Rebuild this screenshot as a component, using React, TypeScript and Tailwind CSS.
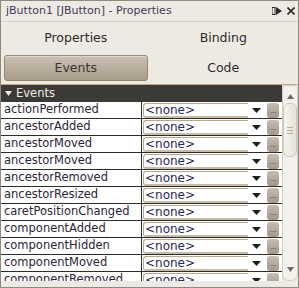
const events = [
  "actionPerformed",
  "ancestorAdded",
  "ancestorMoved",
  "ancestorMoved",
  "ancestorRemoved",
  "ancestorResized",
  "caretPositionChanged",
  "componentAdded",
  "componentHidden",
  "componentMoved",
  "componentRemoved",
];

function EventRow({ name }: { name: string }) {
  return (
    <div className="flex h-[17px] border-b border-[#2e2c2a] bg-white">
      <div className="flex w-[141px] items-center border-r border-[#2e2c2a] pl-[3px] text-[11.5px] leading-none text-[#2c2438]">
        {name}
      </div>
      <div className="flex flex-1 items-center pl-[1px]">
        <div className="flex h-[15px] w-[105px] items-center rounded-l-[3px] border-t border-l border-b-2 border-[#b8a88c] border-b-[#c9bca6] bg-white pl-[1px] text-[12px] leading-none text-[#28285a]">
          &lt;none&gt;
        </div>
        <div className="flex w-[16px] justify-center">
          <svg width="9" height="5" viewBox="0 0 9 5">
            <path d="M0 0 H9 L4.5 5 Z" fill="#1e1e1e" />
          </svg>
        </div>
        <div className="ml-[3px] flex h-[15px] w-[12px] items-end justify-center rounded-[3px] bg-gradient-to-b from-[#c6bdb0] to-[#a3978a] pb-[3px] text-[7px] leading-none text-[#3a342c]">
          ...
        </div>
      </div>
    </div>
  );
}

export default function App() {
  return (
    <div
      className="flex h-[288px] w-[299px] flex-col border border-[#8e8a82] bg-[#edeae3] text-[#2e2c2a]"
      style={{ fontFamily: '"DejaVu Sans", sans-serif' }}
    >
      <div className="flex h-[21px] items-center justify-between border-b border-[#d5cfc4] pl-[5px] pr-[3px]">
        <span className="text-[11px] text-[#45385a]">jButton1 [JButton] - Properties</span>
        <div className="flex items-center gap-[5px]">
          <svg width="10" height="8" viewBox="0 0 10 8">
            <rect x="0" y="0.5" width="3" height="7" fill="none" stroke="#2a2a2a" strokeWidth="1" />
            <path d="M4 0 L10 4 L4 8 Z" fill="#2a2a2a" />
          </svg>
          <svg width="8" height="8" viewBox="0 0 8 8">
            <path d="M0.5 0.5 L7.5 7.5 M7.5 0.5 L0.5 7.5" stroke="#2a2a2a" strokeWidth="1.6" />
          </svg>
        </div>
      </div>

      <div className="grid grid-cols-2 gap-x-[4px] gap-y-[4px] px-[3px] pt-[3px] text-[12.5px]">
        <div className="flex h-[26px] items-center justify-center">Properties</div>
        <div className="flex h-[26px] items-center justify-center">Binding</div>
        <div className="flex h-[26px] items-center justify-center rounded-[3px] border border-[#948873] bg-gradient-to-b from-[#cac1b4] to-[#a89b89] text-[#3a352f] shadow-[inset_0_1px_0_#ddd5ca]">
          Events
        </div>
        <div className="flex h-[26px] items-center justify-center">Code</div>
      </div>

      <div className="mt-[3px] h-[1px] bg-[#c2a983]" />

      <div className="flex h-[196px]">
        <div className="flex-1 overflow-hidden">
          <div className="flex h-[17px] items-center gap-[4px] bg-[#3c3a36] pl-[4px] text-[11.5px] leading-none text-[#f0ece4]">
            <svg width="7" height="5" viewBox="0 0 7 5">
              <path d="M0 0 H7 L3.5 5 Z" fill="#f0ece4" />
            </svg>
            Events
          </div>
          {events.map((e, i) => (
            <EventRow key={i} name={e} />
          ))}
        </div>
        <div className="flex w-[16px] flex-col items-center rounded-b-[7px] rounded-t-[4px] border border-[#d3cbbd] bg-[#f3f1ed] pt-[8px] pb-[8px]">
          <svg width="7" height="5" viewBox="0 0 7 5">
            <path d="M3.5 0 L7 5 H0 Z" fill="#6c6a66" />
          </svg>
          <div className="mt-[4px] flex h-[54px] w-[14px] flex-col items-center justify-center gap-[2px] rounded-[6px] border border-[#cfc6b6] bg-gradient-to-r from-[#f6f4f0] to-[#e6e1d8]">
            <div className="h-[1px] w-[6px] bg-[#b8b0a2]" />
            <div className="h-[1px] w-[6px] bg-[#b8b0a2]" />
            <div className="h-[1px] w-[6px] bg-[#b8b0a2]" />
          </div>
          <div className="flex-1" />
          <svg width="7" height="5" viewBox="0 0 7 5">
            <path d="M0 0 H7 L3.5 5 Z" fill="#6c6a66" />
          </svg>
        </div>
      </div>
    </div>
  );
}
